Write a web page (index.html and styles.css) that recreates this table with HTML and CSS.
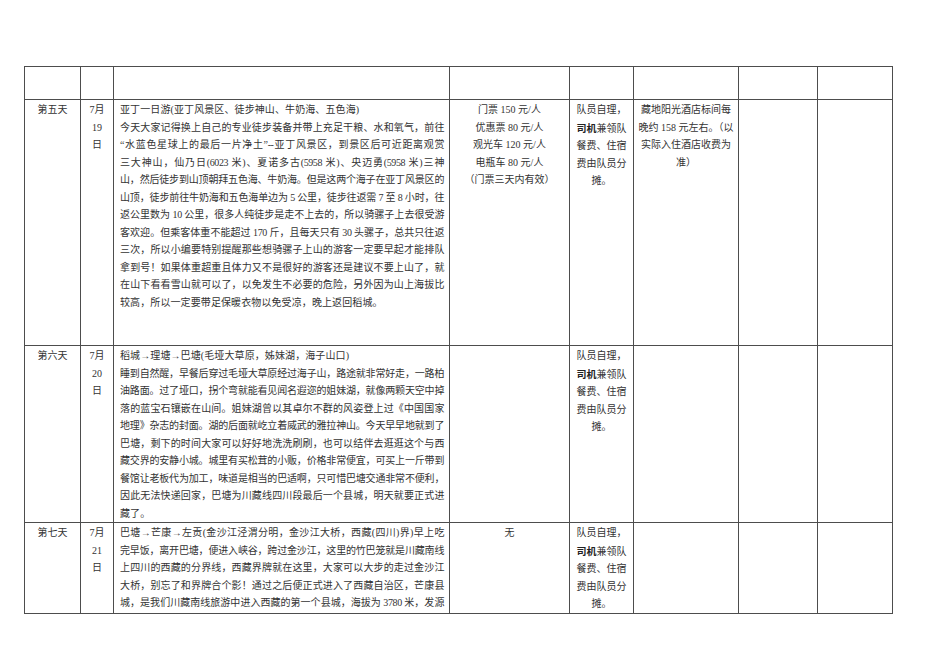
FILE: index.html
```html
<!DOCTYPE html>
<html lang="zh-CN">
<head>
<meta charset="utf-8">
<title>行程表</title>
<link rel="stylesheet" href="styles.css">
</head>
<body>
<div class="page">
<table class="plan">
  <colgroup>
    <col class="c-day"><col class="c-date"><col class="c-text"><col class="c-ticket">
    <col class="c-meal"><col class="c-hotel"><col class="c-x1"><col class="c-x2">
  </colgroup>
  <tr class="r-head">
    <td></td><td></td><td></td><td></td><td></td><td></td><td></td><td></td>
  </tr>
  <tr class="r-d5">
    <td class="center">第五天</td>
    <td class="center num">7月<br>19<br>日</td>
    <td class="desc">
      <div class="title">亚丁一日游(亚丁风景区、徒步神山、牛奶海、五色海)</div>
      <div class="para">
        <span class="ln">今天大家记得换上自己的专业徒步装备并带上充足干粮、水和氧气，前往</span>
        <span class="ln">“水蓝色星球上的最后一片净土”--亚丁风景区，到景区后可近距离观赏</span>
        <span class="ln">三大神山，仙乃日(6023 米)、夏诺多古(5958 米)、央迈勇(5958 米)三神</span>
        <span class="ln">山，然后徒步到山顶朝拜五色海、牛奶海。但是这两个海子在亚丁风景区的</span>
        <span class="ln">山顶，徒步前往牛奶海和五色海单边为 5 公里，徒步往返需 7 至 8 小时，往</span>
        <span class="ln">返公里数为 10 公里，很多人纯徒步是走不上去的，所以骑骡子上去很受游</span>
        <span class="ln">客欢迎。但乘客体重不能超过 170 斤，且每天只有 30 头骡子，总共只往返</span>
        <span class="ln">三次，所以小编要特别提醒那些想骑骡子上山的游客一定要早起才能排队</span>
        <span class="ln">拿到号！如果体重超重且体力又不是很好的游客还是建议不要上山了，就</span>
        <span class="ln">在山下看看雪山就可以了，以免发生不必要的危险，另外因为山上海拔比</span>
        <span class="ln end">较高，所以一定要带足保暖衣物以免受凉，晚上返回稻城。</span>
      </div>
    </td>
    <td class="center">门票 150 元/人<br>优惠票 80 元/人<br>观光车 120 元/人<br>电瓶车 80 元/人<br>（门票三天内有效）</td>
    <td class="center meal">队员自理，<br><b class="em">司机</b>兼领队<br>餐费、住宿<br>费由队员分<br>摊。</td>
    <td class="center hotel">藏地阳光酒店标间每<br>晚约 158 元左右。（以<br>实际入住酒店收费为<br>准）</td>
    <td></td><td></td>
  </tr>
  <tr class="r-d6">
    <td class="center">第六天</td>
    <td class="center num">7月<br>20<br>日</td>
    <td class="desc">
      <div class="title">稻城→理塘→巴塘(毛垭大草原，姊妹湖，海子山口)</div>
      <div class="para">
        <span class="ln">睡到自然醒，早餐后穿过毛垭大草原经过海子山，路途就非常好走，一路柏</span>
        <span class="ln">油路面。过了垭口，拐个弯就能看见闻名遐迩的姐妹湖，就像两颗天空中掉</span>
        <span class="ln">落的蓝宝石镶嵌在山间。姐妹湖曾以其卓尔不群的风姿登上过《中国国家</span>
        <span class="ln">地理》杂志的封面。湖的后面就屹立着威武的雅拉神山。今天早早地就到了</span>
        <span class="ln">巴塘，剩下的时间大家可以好好地洗洗刷刷，也可以结伴去逛逛这个与西</span>
        <span class="ln">藏交界的安静小城。城里有买松茸的小贩，价格非常便宜，可买上一斤带到</span>
        <span class="ln">餐馆让老板代为加工，味道是相当的巴适啊，只可惜巴塘交通非常不便利，</span>
        <span class="ln">因此无法快递回家，巴塘为川藏线四川段最后一个县城，明天就要正式进</span>
        <span class="ln end">藏了。</span>
      </div>
    </td>
    <td></td>
    <td class="center meal">队员自理，<br><b class="em">司机</b>兼领队<br>餐费、住宿<br>费由队员分<br>摊。</td>
    <td></td><td></td><td></td>
  </tr>
  <tr class="r-d7">
    <td class="center">第七天</td>
    <td class="center num">7月<br>21<br>日</td>
    <td class="desc">
      <div class="para">
        <span class="ln">巴塘→芒康→左贡(金沙江泾渭分明，金沙江大桥，西藏(四川)界)早上吃</span>
        <span class="ln">完早饭，离开巴塘，便进入峡谷，跨过金沙江，这里的竹巴笼就是川藏南线</span>
        <span class="ln">上四川的西藏的分界线，西藏界牌就在这里，大家可以大步的走过金沙江</span>
        <span class="ln">大桥，别忘了和界牌合个影！通过之后便正式进入了西藏自治区，芒康县</span>
        <span class="ln">城，是我们川藏南线旅游中进入西藏的第一个县城，海拔为 3780 米，发源</span>
      </div>
    </td>
    <td class="center">无</td>
    <td class="center meal">队员自理，<br><b class="em">司机</b>兼领队<br>餐费、住宿<br>费由队员分<br>摊。</td>
    <td></td><td></td><td></td>
  </tr>
</table>
</div>
</body>
</html>
```

FILE: styles.css
```css
html, body {
  margin: 0;
  padding: 0;
  background: #ffffff;
}

.page {
  padding: 66px 0 0 24px;
}

.plan {
  border-collapse: collapse;
  table-layout: fixed;
  width: 868px;
  font-family: "Liberation Serif", "Noto Sans CJK SC", serif;
  font-size: 10px;
  line-height: 17.5px;
  color: #333333;
}

.c-day { width: 56px; }
.c-date { width: 33px; }
.c-text { width: 336px; }
.c-ticket { width: 120px; }
.c-meal { width: 64px; }
.c-hotel { width: 105px; }
.c-x1 { width: 79px; }
.c-x2 { width: 75px; }

.plan td {
  border: 1px solid #4d4d4d;
  vertical-align: top;
  padding: 1px 2px 0;
}

.r-head { height: 33px; }
.r-d5 { height: 246px; }
.r-d6 { height: 177px; }
.r-d7 { height: 88px; }

.center { text-align: center; }

.num { padding: 1px 0 0; }

.plan td.desc {
  padding: 1px 5px 0 6px;
}

.title {
  white-space: nowrap;
  letter-spacing: 0.1px;
}

.ln {
  display: block;
  white-space: nowrap;
  letter-spacing: -0.4px;
  text-align: justify;
  text-align-last: justify;
}

.ln.end {
  letter-spacing: 0.1px;
  text-align-last: left;
}

.plan td.meal {
  padding: 1px 4px 0;
}

.plan td.hotel {
  padding: 1px 4px 0;
}

.em {
  font-family: "Noto Sans CJK SC", sans-serif;
  font-weight: 700;
  color: #222222;
}
```
